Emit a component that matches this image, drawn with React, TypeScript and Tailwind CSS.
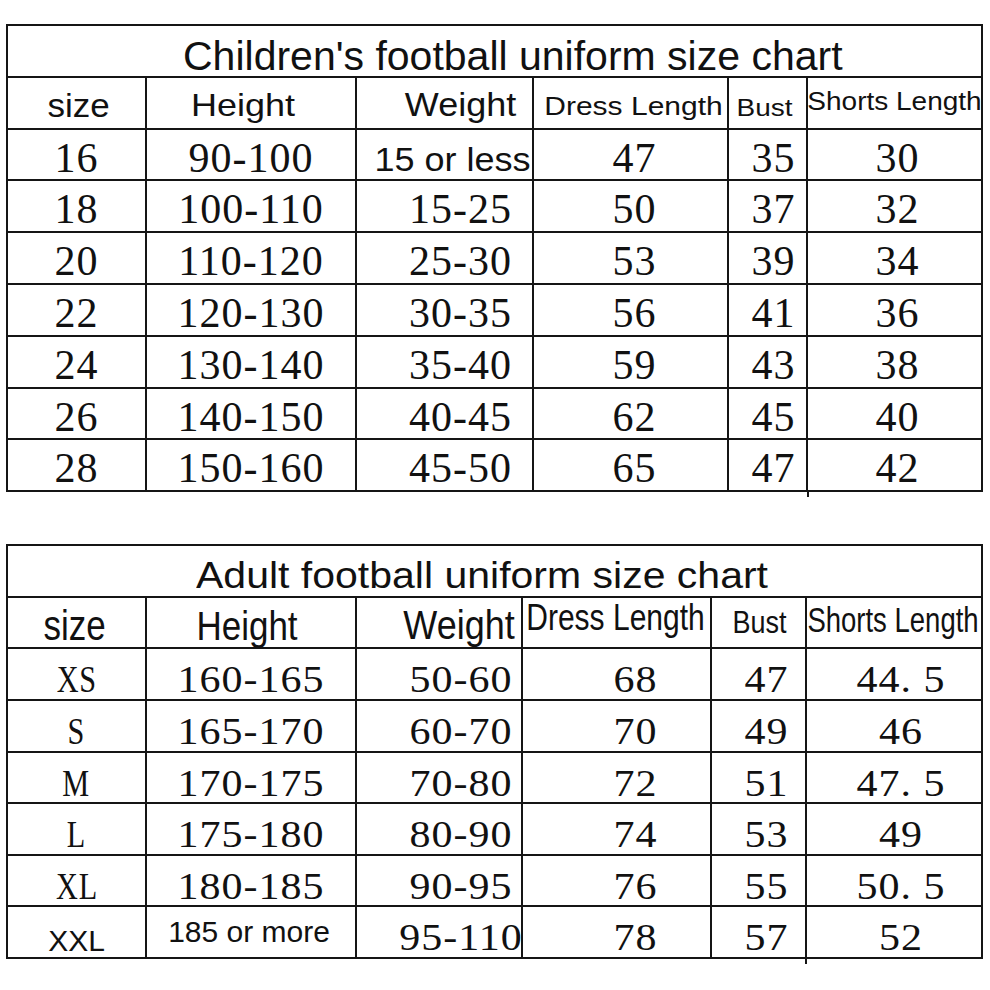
const SANS = "font-['Liberation_Sans',Arial,sans-serif]"
const SERIF = "font-['Liberation_Serif','Times_New_Roman',serif]"
const SPAN = 'inline-block leading-none whitespace-nowrap origin-[50%_84%] text-[#111]'

type Cell = { t: string; cell: string; text: string }

// header cells: cell class holds the padding, text class holds font / offset / stretch
const topHead: Cell[] = [
  { t: 'size', cell: 'pt-[9px]', text: `${SANS} text-[35px] translate-x-[2px] scale-y-[0.93]` },
  { t: 'Height', cell: 'pt-[8px]', text: `${SANS} text-[36px] -translate-x-[8px] scale-y-[0.85]` },
  { t: 'Weight', cell: 'pt-[8px]', text: `${SANS} text-[36px] translate-x-[16px] scale-y-[0.92]` },
  { t: 'Dress Length', cell: 'pt-[12px]', text: `${SANS} text-[30px] translate-x-[3px] scale-y-[0.83]` },
  { t: 'Bust', cell: 'pt-[15px]', text: `${SANS} text-[28px] -translate-x-[3px] scale-y-[0.83]` },
  { t: 'Shorts Length', cell: 'pt-[9px]', text: `${SANS} text-[28px] scale-y-[0.95]` },
]

const bottomHead: Cell[] = [
  { t: 'size', cell: 'pt-[12px]', text: `${SANS} text-[35px] -translate-x-[2px] scale-y-[1.2]` },
  { t: 'Height', cell: 'pt-[12px]', text: `${SANS} text-[35px] -translate-x-[4px] scale-y-[1.16]` },
  { t: 'Weight', cell: 'pt-[11px]', text: `${SANS} text-[36px] translate-x-[20px] scale-y-[1.15]` },
  { t: 'Dress Length', cell: 'pt-[7px]', text: `${SANS} text-[30px] -translate-x-[1px] scale-y-[1.25]` },
  { t: 'Bust', cell: 'pt-[13px]', text: `${SANS} text-[27px] translate-x-[1px] scale-y-[1.19]` },
  { t: 'Shorts Length', cell: 'pt-[11px]', text: `${SANS} text-[27.5px] -translate-x-[1px] scale-y-[1.25]` },
]

const topRows = [
  ['16', '90-100', '15 or less', '47', '35', '30'],
  ['18', '100-110', '15-25', '50', '37', '32'],
  ['20', '110-120', '25-30', '53', '39', '34'],
  ['22', '120-130', '30-35', '56', '41', '36'],
  ['24', '130-140', '35-40', '59', '43', '38'],
  ['26', '140-150', '40-45', '62', '45', '40'],
  ['28', '150-160', '45-50', '65', '47', '42'],
]

const bottomRows = [
  ['XS', '160-165', '50-60', '68', '47', '44. 5'],
  ['S', '165-170', '60-70', '70', '49', '46'],
  ['M', '170-175', '70-80', '72', '51', '47. 5'],
  ['L', '175-180', '80-90', '74', '53', '49'],
  ['XL', '180-185', '90-95', '76', '55', '50. 5'],
  ['XXL', '185 or more', '95-110', '78', '57', '52'],
]

const topShift = ['', '', 'translate-x-[16px]', 'translate-x-[4px]', 'translate-x-[6px]', 'translate-x-[3px]']
const bottomShift = ['', '', 'translate-x-[22px]', 'translate-x-[19px]', 'translate-x-[8px]', 'translate-x-[7px]']

const special: Record<string, { cell: string; text: string }> = {
  '15 or less': { cell: 'pt-[11px]', text: `${SANS} text-[36px] translate-x-[8px] scale-y-[0.93]` },
  '185 or more': { cell: 'pt-[10px]', text: `${SANS} text-[30px] -translate-x-[2px]` },
  XXL: { cell: 'pt-[19px]', text: `${SANS} text-[30px]` },
}

const sizeLetters = ['XS', 'S', 'M', 'L', 'XL']

function dataCells(rows: string[][], shift: string[], bottom: boolean): Cell[] {
  const cells: Cell[] = []
  rows.forEach(row => {
    row.forEach((t, i) => {
      const sp = special[t]
      if (sp) {
        cells.push({ t, ...sp })
        return
      }
      const letters = sizeLetters.includes(t) ? 'scale-x-[0.72]' : ''
      cells.push({
        t,
        cell: bottom ? 'pt-[8px]' : 'pt-[7px]',
        text: `${SERIF} text-[42px] tracking-[1px] ${shift[i]} ${letters} ${bottom ? 'scale-y-[0.88]' : ''}`,
      })
    })
  })
  return cells
}

function SizeTable({ title, titleCell, titleText, cols, rowH, head, cells, tick }: {
  title: string
  titleCell: string
  titleText: string
  cols: string
  rowH: string
  head: Cell[]
  cells: Cell[]
  tick: string
}) {
  return (
    <div className="relative w-[977px]">
      <div className={`grid gap-[2px] p-[2px] bg-[#151515] ${cols} ${rowH}`}>
        <div className={`col-span-6 bg-white flex items-start justify-start ${titleCell}`}>
          <span className={`${SPAN} ${SANS} ${titleText}`}>{title}</span>
        </div>
        {[...head, ...cells].map((c, i) => (
          <div key={i} className={`bg-white flex items-start justify-center ${c.cell}`}>
            <span className={`${SPAN} ${c.text}`}>{c.t}</span>
          </div>
        ))}
      </div>
      {/* the bust column line runs a little past the bottom edge */}
      <div className={`absolute top-full w-[2px] bg-[#151515] ${tick}`} />
    </div>
  )
}

export default function App() {
  return (
    <div className="w-[990px] h-[990px] bg-white pt-[24px] pl-[6px]">
      <SizeTable
        title="Children's football uniform size chart"
        titleCell="pt-[10px] pl-[175px]"
        titleText="text-[41px]"
        cols="grid-cols-[137px_208px_175px_193px_77px_173px]"
        rowH="auto-rows-[49.8px]"
        head={topHead}
        cells={dataCells(topRows, topShift, false)}
        tick="left-[801px] h-[5px]"
      />
      <div className="h-[52px]" />
      <SizeTable
        title="Adult football uniform size chart"
        titleCell="pt-[8px] pl-[188px]"
        titleText="text-[41px] scale-y-[0.88]"
        cols="grid-cols-[137px_208px_164px_187px_93px_174px]"
        rowH="auto-rows-[49.6px]"
        head={bottomHead}
        cells={dataCells(bottomRows, bottomShift, true)}
        tick="left-[799px] h-[5px]"
      />
    </div>
  )
}
